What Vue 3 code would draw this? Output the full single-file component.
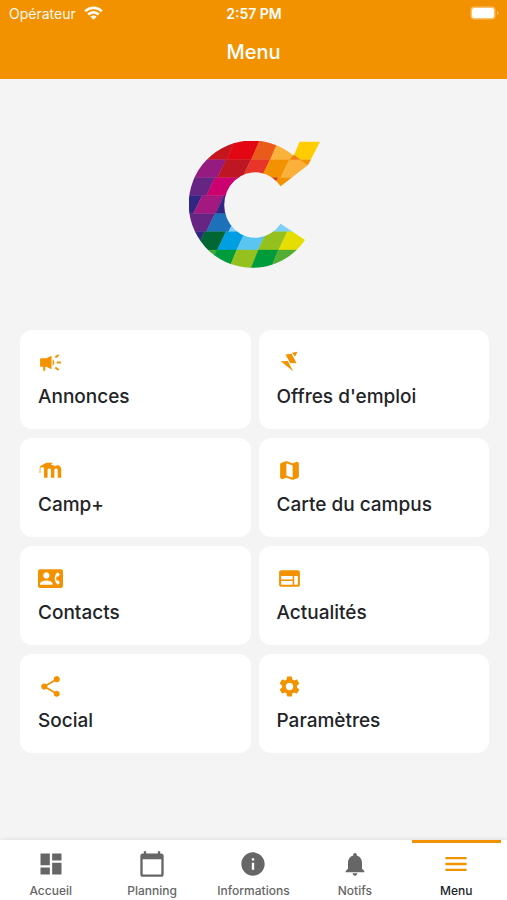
<script setup>
const cards = [
  { label: 'Annonces', icon: 'M18 11v2h4v-2h-4zm-2 6.610c.96.71 2.210 1.650 3.200 2.390.4-.53.8-1.070 1.200-1.600-.99-.74-2.240-1.680-3.200-2.400-.4.54-.8 1.080-1.200 1.610zM20.400 5.600c-.4-.53-.8-1.070-1.200-1.600-.99.74-2.240 1.680-3.200 2.400.4.53.8 1.070 1.200 1.600.96-.72 2.210-1.650 3.200-2.400zM3 8c-.6 0-1 .4-1 1v6c0 .6.4 1 1 1h2v4h2v-4h1l5 2.500V5.500L8 8H3zm12.500 4c0-1.330-.58-2.530-1.500-3.350v6.690c.92-.81 1.500-2.010 1.500-3.340z' },
  { label: "Offres d'emploi", icon: 'M3.600 10.800L10.300 10.500L15.600 20.500ZM8.200 4.300L14 3.700L18.800 12.800L12.600 12.500ZM14.400 2.700L19.600 1.700L17.300 6.400Z' },
  { label: 'Camp+', icon: 'M2 7.800L8 4.500H14.200L12.400 6.900C13.900 6.500 15.200 6.900 16 7.900C18.800 5.700 22.300 7.300 22.300 10.800V19H18.900V11.600C18.900 9.500 15.700 9.500 15.700 11.600V19H12.400V11.600C12.400 9.500 9.200 9.500 9.200 11.600V19H5.800V9.200L2.400 8.800L2.300 14.500H1.500L1.700 8.600Z' },
  { label: 'Carte du campus', icon: 'M14.650 4.980l-5-1.750c-.42-.15-.88-.15-1.300-.01L4.360 4.560C3.550 4.840 3 5.600 3 6.460v11.850c0 1.410 1.410 2.370 2.720 1.860l2.930-1.140c.22-.09.47-.09.69-.01l5 1.750c.42.15.88.15 1.300.01l3.990-1.340c.81-.27 1.360-1.040 1.360-1.900V5.690c0-1.410-1.410-2.370-2.720-1.860l-2.930 1.140c-.22.08-.46.09-.69.01zM15 18.890l-6-2.110V5.110l6 2.110v11.670z' },
  { label: 'Contacts', icon: 'M22 3H2C.9 3 0 3.900 0 5v14c0 1.100.9 2 2 2h20c1.100 0 1.990-.9 1.990-2L24 5c0-1.100-.9-2-2-2zM8 6c1.660 0 3 1.340 3 3s-1.340 3-3 3-3-1.340-3-3 1.340-3 3-3zm6 12H2v-1c0-2 4-3.100 6-3.100s6 1.100 6 3.100v1zm3.850-4h1.640L21 16l-1.990 1.990c-1.310-.98-2.280-2.380-2.730-3.990-.18-.64-.28-1.310-.28-2s.1-1.360.28-2c.45-1.620 1.420-3.010 2.730-3.990L21 8l-1.510 2h-1.640c-.22.63-.35 1.300-.35 2s.13 1.370.35 2z' },
  { label: 'Actualités', icon: 'M20 4H4c-1.100 0-1.990.9-1.990 2L2 18c0 1.100.9 2 2 2h16c1.100 0 2-.9 2-2V6c0-1.100-.9-2-2-2zm-5 14H4v-3.500h11V18zm0-5H4V9.500h11V13zm5 5h-3.500V9.500H20V18z' },
  { label: 'Social', icon: 'M18 16.080c-.76 0-1.440.3-1.960.77L8.910 12.700c.05-.23.09-.46.09-.7s-.04-.47-.09-.7l7.050-4.110c.54.5 1.250.81 2.040.81 1.660 0 3-1.340 3-3s-1.340-3-3-3-3 1.340-3 3c0 .24.04.47.09.7L8.040 9.810C7.500 9.310 6.790 9 6 9c-1.660 0-3 1.340-3 3s1.340 3 3 3c.79 0 1.500-.31 2.040-.81l7.120 4.160c-.05.21-.08.43-.08.65 0 1.610 1.310 2.920 2.920 2.920s2.920-1.310 2.920-2.920-1.310-2.920-2.920-2.920z' },
  { label: 'Paramètres', icon: 'M19.140 12.940c.04-.3.06-.61.06-.94 0-.32-.02-.64-.07-.94l2.030-1.580c.18-.14.23-.41.12-.61l-1.920-3.320c-.12-.22-.37-.29-.59-.22l-2.390.96c-.5-.38-1.030-.7-1.620-.94l-.36-2.540c-.04-.24-.24-.41-.48-.41h-3.840c-.24 0-.43.17-.47.41l-.36 2.540c-.59.24-1.130.57-1.620.94l-2.390-.96c-.22-.08-.47 0-.59.22L2.740 8.870c-.12.21-.08.47.12.61l2.030 1.580c-.05.3-.09.63-.09.94s.02.64.07.94l-2.030 1.580c-.18.14-.23.41-.12.61l1.920 3.320c.12.22.37.29.59.22l2.390-.96c.5.38 1.030.7 1.620.94l.36 2.540c.05.24.24.41.48.41h3.840c.24 0 .44-.17.47-.41l.36-2.540c.59-.24 1.130-.56 1.620-.94l2.390.96c.22.08.47 0 .59-.22l1.920-3.320c.12-.22.07-.47-.12-.61l-2.010-1.580zM12 15.600c-1.980 0-3.600-1.620-3.600-3.600s1.620-3.600 3.600-3.600 3.600 1.620 3.600 3.600-1.620 3.600-3.600 3.600z' },
]

const tabs = [
  { label: 'Accueil', icon: 'M3 13h8V3H3v10zm0 8h8v-6H3v6zm10 0h8V11h-8v10zm0-18v6h8V3h-8z' },
  { label: 'Planning', icon: 'M20 3h-1V1h-2v2H7V1H5v2H4c-1.100 0-2 .9-2 2v16c0 1.100.9 2 2 2h16c1.100 0 2-.9 2-2V5c0-1.100-.9-2-2-2zm0 18H4V8h16v13z' },
  { label: 'Informations', icon: 'M12 2C6.480 2 2 6.480 2 12s4.480 10 10 10 10-4.480 10-10S17.520 2 12 2zm1 15h-2v-6h2v6zm0-8h-2V7h2v2z' },
  { label: 'Notifs', icon: 'M12 22c1.100 0 2-.9 2-2h-4c0 1.100.89 2 2 2zm6-6v-5c0-3.070-1.640-5.640-4.500-6.320V4c0-.83-.67-1.500-1.500-1.500s-1.500.67-1.500 1.500v.68C7.630 5.360 6 7.920 6 11v5l-2 2v1h16v-1l-2-2z' },
  { label: 'Menu', icon: 'M3 18h18v-2H3v2zm0-5h18v-2H3v2zm0-7v2h18V6H3z', active: true },
]

// Each band of the logo: its top, its bottom, and [right edge at the top, colour] from left to right.
const SLANT = 26
const bands = [
  { top: 30, bottom: 90, cells: [[166, '#c4161c'], [240, '#e30613'], [297, '#ea5b1b'], [355, '#fbb23c'], [460, '#ffcc00']] },
  { top: 90, bottom: 144, cells: [[138, '#951b81'], [213, '#be1622'], [270, '#e73529'], [328, '#f39200'], [460, '#fbb03b']] },
  { top: 144, bottom: 198, cells: [[105, '#662483'], [210, '#cc006f'], [294, '#d9331c'], [460, '#f39200']] },
  { top: 198, bottom: 252, cells: [[66, '#312783'], [132, '#a3197f'], [460, '#312783']] },
  { top: 252, bottom: 306, cells: [[105, '#662483'], [172, '#1d71b8'], [460, '#7dcff5']] },
  { top: 306, bottom: 361, cells: [[74, '#312783'], [138, '#006633'], [196, '#009fe3'], [260, '#5bc5f2'], [322, '#95c11f'], [460, '#e6de00']] },
  { top: 361, bottom: 425, cells: [[110, '#3aaa35'], [170, '#009b3a'], [235, '#95c11f'], [295, '#009b3a'], [460, '#52ae32']] },
]
const cells = bands.flatMap(({ top, bottom, cells }) =>
  cells.map(([edge, color], i) => {
    const left = i ? cells[i - 1][0] : 0
    return { color, points: `${left},${top} ${edge},${top} ${edge - SLANT},${bottom} ${left - SLANT},${bottom}` }
  }),
)
</script>

<template>
  <div class="screen">
    <header class="header">
      <div class="status">
        <div class="carrier">
          <span>Opérateur</span>
          <svg class="wifi" viewBox="0 0 19 14" aria-hidden="true">
            <path d="M1.200 5.300C5.700.7 13.300.7 17.800 5.300M4.200 8.500c3-2.900 7.600-2.900 10.600 0" fill="none" stroke="currentColor" stroke-width="2.600" />
            <path d="M9.500 13.800L6.300 10.800c1.800-1.600 4.600-1.600 6.400 0z" fill="currentColor" />
          </svg>
        </div>
        <span class="time">2:57 PM</span>
        <svg class="battery" viewBox="0 0 29 14" aria-hidden="true">
          <rect x=".5" y=".5" width="25" height="13" rx="4" fill="#f9c06a" />
          <rect x="2" y="2" width="22" height="10" rx="2.500" fill="#fff" />
          <path d="M27 5c2 .8 2 3.200 0 4z" fill="#f9c06a" />
        </svg>
      </div>
      <h1 class="title">Menu</h1>
    </header>

    <main class="content">
      <svg class="logo" viewBox="27 34 396 390" role="img" aria-label="Campus">
        <defs>
          <clipPath id="logo-shape">
            <path d="M375 331A191 191 0 1 1 341 78L359 36H420L384 106L302 170A93 98 0 1 0 302 282Z" />
          </clipPath>
        </defs>
        <g clip-path="url(#logo-shape)">
          <polygon v-for="cell in cells" :key="cell.points" :points="cell.points" :fill="cell.color" :stroke="cell.color" />
          <path d="M329 90L340 74L362 90Z" fill="#ef7d1a" />
          <path d="M359 90H396L384 106Z" fill="#f39200" />
        </g>
      </svg>

      <nav class="grid" aria-label="Rubriques">
        <a v-for="card in cards" :key="card.label" class="card" href="#">
          <svg class="card-icon" viewBox="0 0 24 24" aria-hidden="true"><path :d="card.icon" /></svg>
          <span>{{ card.label }}</span>
        </a>
      </nav>
    </main>

    <nav class="tabs" aria-label="Navigation principale">
      <a v-for="tab in tabs" :key="tab.label" class="tab" :class="{ active: tab.active }" href="#">
        <svg class="tab-icon" viewBox="0 0 24 24" aria-hidden="true"><path :d="tab.icon" /></svg>
        <span>{{ tab.label }}</span>
      </a>
    </nav>
  </div>
</template>

<style>
body {
  margin: 0;
  background: #f4f4f4;
}
</style>

<style scoped>
.screen {
  display: flex;
  flex-direction: column;
  min-height: 100vh;
  font-family: Inter, "Liberation Sans", sans-serif;
  color: #222428;
}

a {
  color: inherit;
  text-decoration: none;
}

.header {
  background: #f39200;
  color: #fff;
  padding-bottom: 15px;
}

.status {
  display: grid;
  grid-template-columns: 1fr auto 1fr;
  align-items: center;
  height: 26px;
  padding: 0 8px 0 9px;
  font-size: 14px;
}

.carrier {
  display: flex;
  align-items: center;
  gap: 8px;
  opacity: 0.95;
}

.wifi {
  width: 19px;
  height: 14px;
}

.time {
  font-weight: 600;
}

.battery {
  width: 29px;
  height: 14px;
  justify-self: end;
}

.title {
  margin: 0;
  padding-top: 14px;
  font-size: 20px;
  font-weight: 500;
  line-height: 24px;
  text-align: center;
}

.content {
  flex: 1;
  display: flex;
  flex-direction: column;
  align-items: center;
  gap: 59px;
  padding: 62px 18px 24px 20px;
}

.logo {
  width: 132px;
  height: 130px;
}

.grid {
  align-self: stretch;
  display: grid;
  grid-template-columns: 1fr 1fr;
  gap: 9px 8px;
}

.card {
  display: flex;
  flex-direction: column;
  gap: 9px;
  padding: 20px 18px 19px;
  border-radius: 12px;
  background: #fff;
  font-size: 19px;
  font-weight: 500;
  line-height: 26px;
}

.card-icon {
  width: 25px;
  height: 25px;
  fill: #f39200;
}

.tabs {
  position: sticky;
  bottom: 0;
  display: grid;
  grid-template-columns: repeat(5, 1fr);
  background: #fff;
  box-shadow: 0 0 4px rgba(0, 0, 0, 0.12);
}

.tab {
  display: flex;
  flex-direction: column;
  align-items: center;
  gap: 5px;
  margin: 0 6px;
  padding: 7px 0 1px;
  border-top: 3px solid transparent;
  color: #666;
  font-size: 12px;
  font-weight: 500;
  line-height: 16px;
}

.tab-icon {
  width: 28px;
  height: 28px;
  fill: currentColor;
}

.active {
  border-color: #f39200;
  color: #222428;
}

.active .tab-icon {
  fill: #f39200;
}
</style>
